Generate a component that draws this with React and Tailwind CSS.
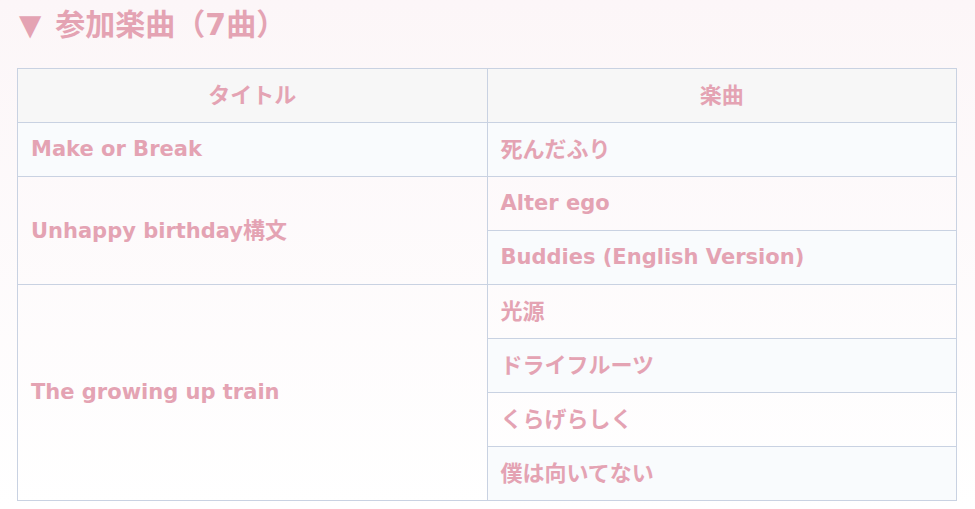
import React from "react";

const rows = [
  { title: "Make or Break", songs: ["死んだふり"] },
  { title: "Unhappy birthday構文", songs: ["Alter ego", "Buddies (English Version)"] },
  { title: "The growing up train", songs: ["光源", "ドライフルーツ", "くらげらしく", "僕は向いてない"] },
];

// japanese glyphs a touch larger than the latin ones, like the original font
const Mixed = ({ text }) =>
  text.split(/([\u3000-\u30ff\u4e00-\u9fff\uff00-\uffef]+)/).filter(Boolean).map((part, i) =>
    /[\u3000-\u30ff\u4e00-\u9fff\uff00-\uffef]/.test(part) ? (
      <span key={i} className="text-[22px]">{part}</span>
    ) : (
      <span key={i}>{part}</span>
    )
  );

const App = () => {
  let rowIndex = 0;
  return (
    <div
      className="min-h-[509px] w-full bg-gradient-to-b from-[#fcf6f8] to-[#ffffff] px-[17px] pb-2 text-[#e4a3b3]"
      style={{ fontFamily: '"DejaVu Sans", "Noto Sans CJK JP", sans-serif' }}
    >
      <h2 className="flex h-[50px] items-center pl-[2px] text-[30px] font-bold leading-none">
        <span className="mr-[14px] text-[29px]">▼</span>
        参加楽曲（7曲）
      </h2>
      <table className="mt-[18px] w-[940px] table-fixed border-collapse text-[21px] font-bold">
        <thead>
          <tr className="h-[54px] bg-[#f7f7f7]">
            <th className="w-1/2 border border-[#c9d2e2] text-center text-[22px]">タイトル</th>
            <th className="w-1/2 border border-[#c9d2e2] text-center text-[22px]">楽曲</th>
          </tr>
        </thead>
        <tbody>
          {rows.map((r) =>
            r.songs.map((song, i) => {
              const odd = rowIndex++ % 2 === 0;
              return (
                <tr key={song} className={`h-[54px] ${odd ? "bg-[#f9fbfd]" : "bg-transparent"}`}>
                  {i === 0 && (
                    <td rowSpan={r.songs.length} className="border border-[#c9d2e2] px-[13px] align-middle">
                      <Mixed text={r.title} />
                    </td>
                  )}
                  <td className="border border-[#c9d2e2] px-[13px] align-middle">
                    <Mixed text={song} />
                  </td>
                </tr>
              );
            })
          )}
        </tbody>
      </table>
    </div>
  );
};

export default App;
